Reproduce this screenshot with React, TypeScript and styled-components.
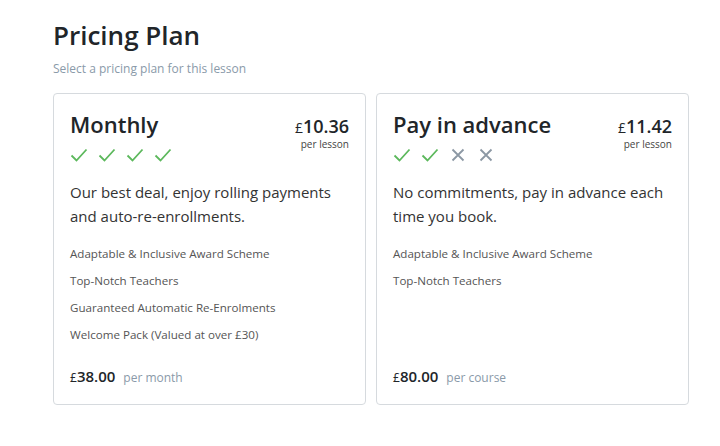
import React from 'react'
import styled, { createGlobalStyle } from 'styled-components'

const GlobalStyle = createGlobalStyle`
  body {
    margin: 0;
    background: #fff;
    font-family: 'Open Sans', 'Noto Sans', sans-serif;
    color: #212529;
  }
`

const Page = styled.div`
  padding: 17px 32px 0 53px;
`

const Title = styled.h1`
  margin: 0;
  font-size: 26px;
  font-weight: 600;
  line-height: 36px;
  color: #212529;
`

const Subtitle = styled.div`
  margin-top: 7px;
  font-size: 12px;
  color: #8a9aa9;
`

const Cards = styled.div`
  display: grid;
  grid-template-columns: 313px 313px;
  gap: 10px;
  margin-top: 16px;
`

const Card = styled.div`
  height: 312px;
  box-sizing: border-box;
  border: 1px solid #d6dade;
  border-radius: 4px;
  padding: 14px 16px 18px 16px;
  display: flex;
  flex-direction: column;
`

const Head = styled.div`
  display: flex;
  justify-content: space-between;
  align-items: flex-start;
`

const PlanName = styled.div`
  font-size: 22px;
  font-weight: 600;
  line-height: 32px;
`

const Marks = styled.div`
  display: flex;
  gap: 10px;
  margin-top: 6px;
`

const Price = styled.div`
  text-align: right;
  padding-top: 8px;
`

const PriceValue = styled.div`
  font-size: 18px;
  font-weight: 600;
  line-height: 20px;
`

const Pound = styled.span`
  font-size: 14px;
  font-weight: 400;
`

const PerLesson = styled.div`
  font-size: 10px;
  line-height: 12px;
  color: #444;
`

const Description = styled.p`
  margin: 16px 0 12px;
  font-size: 15px;
  line-height: 24px;
  color: #333;
`

const Features = styled.ul`
  list-style: none;
  margin: 0;
  padding: 0;
`

const Feature = styled.li`
  font-size: 11.6px;
  line-height: 27px;
  color: #555;
`

const Footer = styled.div`
  margin-top: auto;
  display: flex;
  align-items: baseline;
  gap: 8px;
`

const Total = styled.span`
  font-size: 15px;
  font-weight: 600;
`

const TotalPound = styled.span`
  font-size: 12px;
  font-weight: 400;
`

const Period = styled.span`
  font-size: 12px;
  color: #8a9aa9;
`

const Check = () => (
  <svg width="18" height="18" viewBox="0 0 18 18" fill="none">
    <path d="M1.5 9.5 L6.5 14.5 L16.5 3.5" stroke="#5cb85c" strokeWidth="1.8" />
  </svg>
)

const Cross = () => (
  <svg width="18" height="18" viewBox="0 0 18 18" fill="none">
    <path d="M3.5 3.5 L14.5 14.5 M14.5 3.5 L3.5 14.5" stroke="#8c98a4" strokeWidth="1.8" />
  </svg>
)

interface Plan {
  name: string
  price: string
  marks: boolean[]
  description: string
  features: string[]
  total: string
  period: string
}

const plans: Plan[] = [
  {
    name: 'Monthly',
    price: '10.36',
    marks: [true, true, true, true],
    description: 'Our best deal, enjoy rolling payments and auto-re-enrollments.',
    features: [
      'Adaptable & Inclusive Award Scheme',
      'Top-Notch Teachers',
      'Guaranteed Automatic Re-Enrolments',
      'Welcome Pack (Valued at over £30)'
    ],
    total: '38.00',
    period: 'per month'
  },
  {
    name: 'Pay in advance',
    price: '11.42',
    marks: [true, true, false, false],
    description: 'No commitments, pay in advance each time you book.',
    features: ['Adaptable & Inclusive Award Scheme', 'Top-Notch Teachers'],
    total: '80.00',
    period: 'per course'
  }
]

export default function App() {
  return (
    <>
      <GlobalStyle />
      <Page>
        <Title>Pricing Plan</Title>
        <Subtitle>Select a pricing plan for this lesson</Subtitle>
        <Cards>
          {plans.map(plan => (
            <Card key={plan.name}>
              <Head>
                <div>
                  <PlanName>{plan.name}</PlanName>
                  <Marks>
                    {plan.marks.map((ok, i) => (ok ? <Check key={i} /> : <Cross key={i} />))}
                  </Marks>
                </div>
                <Price>
                  <PriceValue>
                    <Pound>£</Pound>
                    {plan.price}
                  </PriceValue>
                  <PerLesson>per lesson</PerLesson>
                </Price>
              </Head>
              <Description>{plan.description}</Description>
              <Features>
                {plan.features.map(f => (
                  <Feature key={f}>{f}</Feature>
                ))}
              </Features>
              <Footer>
                <Total>
                  <TotalPound>£</TotalPound>
                  {plan.total}
                </Total>
                <Period>{plan.period}</Period>
              </Footer>
            </Card>
          ))}
        </Cards>
      </Page>
    </>
  )
}
